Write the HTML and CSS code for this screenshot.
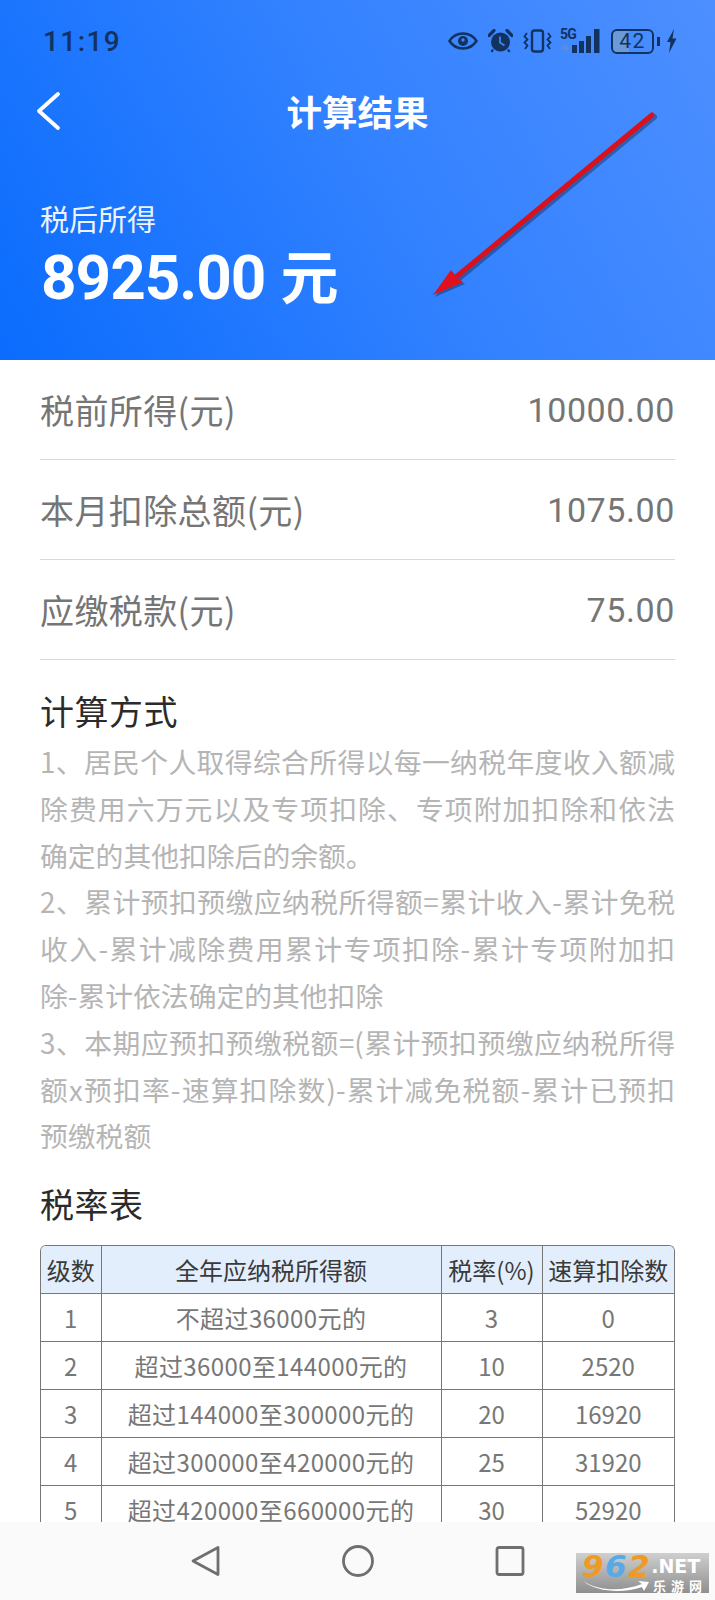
FILE: index.html
```html
<!DOCTYPE html>
<html lang="zh-CN">
<head>
<meta charset="utf-8">
<title>计算结果</title>
<link rel="stylesheet" href="styles.css">
</head>
<body>
<div class="page">
  <header class="hero">
    <div class="status">
      <span class="time">11:19</span>
      <div class="status-icons">
        <svg class="i-eye" viewBox="0 0 30 18"><path d="M1.500 9C5 3.500 10 1.500 15 1.500S25 3.500 28.500 9C25 14.500 20 16.500 15 16.500S5 14.500 1.500 9Z" fill="none" stroke="#12335f" stroke-width="2.600"/><circle cx="15" cy="9" r="5" fill="#12335f"/><circle cx="15" cy="8" r="1.700" fill="#3f86f5"/></svg>
        <svg class="i-alarm" viewBox="0 0 25 24"><circle cx="12.500" cy="13" r="9.500" fill="#12335f"/><path d="M1 6.500 6 1.500 M19 1.500 24 6.500" stroke="#12335f" stroke-width="3.200" stroke-linecap="round"/><path d="M5 20.500 3.500 23 M20 20.500 21.500 23" stroke="#12335f" stroke-width="2.200"/><path d="M12 7.500V13.500L16.500 16.500" fill="none" stroke="#3f86f5" stroke-width="1.800"/></svg>
        <svg class="i-vib" viewBox="0 0 29 24"><rect x="9" y="1.500" width="11" height="21" rx="2.500" fill="none" stroke="#12335f" stroke-width="2.400"/><path d="M4 4 1.500 7.500 4.500 10.500 1.500 13.500 4.500 16.500 2 20 M25 4 27.500 7.500 24.500 10.500 27.500 13.500 24.500 16.500 27 20" fill="none" stroke="#12335f" stroke-width="1.800"/></svg>
        <div class="signal">
          <span class="net">5G</span>
          <svg class="i-bars" viewBox="0 0 40 24"><path d="M1 18.500 4.500 15.500V22L1 19.500Z M9 18.500 5.500 15.500V22L9 19.500Z" fill="#5f8fd0"/><rect x="12" y="16" width="5" height="8" fill="#12335f"/><rect x="19" y="12" width="5" height="12" fill="#12335f"/><rect x="26" y="7" width="5" height="17" fill="#12335f"/><rect x="34" y="0" width="5.500" height="24" fill="#12335f"/></svg>
        </div>
        <div class="battery"><span class="level">42</span></div>
        <span class="nub"></span>
        <svg class="i-bolt" viewBox="0 0 11 24"><path d="M8 0 1 13H4.500L3 24 10.500 9.500H6.500Z" fill="#12335f"/></svg>
      </div>
    </div>
    <div class="topbar">
      <svg class="back" viewBox="0 0 26 40"><path d="M23 3 4 20 23 37" fill="none" stroke="#fff" stroke-width="3.800" stroke-linecap="round" stroke-linejoin="round"/></svg>
      <h1 class="title">计算结果</h1>
    </div>
    <p class="hero-label">税后所得</p>
    <p class="hero-value">8925.00<span class="hero-unit">元</span></p>
  </header>

  <main class="content">
    <div class="row"><span class="row-label">税前所得(元)</span><span class="num">10000.00</span></div>
    <div class="row"><span class="row-label">本月扣除总额(元)</span><span class="num">1075.00</span></div>
    <div class="row"><span class="row-label">应缴税款(元)</span><span class="num">75.00</span></div>

    <h2 class="section first">计算方式</h2>
    <div class="paras">
      <p class="para">1、居民个人取得综合所得以每一纳税年度收入额减除费用六万元以及专项扣除、专项附加扣除和依法确定的其他扣除后的余额。</p>
      <p class="para">2、累计预扣预缴应纳税所得额=累计收入-累计免税收入-累计减除费用累计专项扣除-累计专项附加扣除-累计依法确定的其他扣除</p>
      <p class="para">3、本期应预扣预缴税额=(累计预扣预缴应纳税所得额x预扣率-速算扣除数)-累计减免税额-累计已预扣预缴税额</p>
    </div>

    <h2 class="section second">税率表</h2>
    <div class="table-wrap">
      <table class="rates">
        <thead>
          <tr><th class="c1">级数</th><th class="c2">全年应纳税所得额</th><th class="c3">税率(%)</th><th class="c4">速算扣除数</th></tr>
        </thead>
        <tbody>
          <tr><td>1</td><td>不超过36000元的</td><td>3</td><td>0</td></tr>
          <tr><td>2</td><td>超过36000至144000元的</td><td>10</td><td>2520</td></tr>
          <tr><td>3</td><td>超过144000至300000元的</td><td>20</td><td>16920</td></tr>
          <tr><td>4</td><td>超过300000至420000元的</td><td>25</td><td>31920</td></tr>
          <tr><td>5</td><td>超过420000至660000元的</td><td>30</td><td>52920</td></tr>
        </tbody>
      </table>
    </div>
  </main>

  <nav class="navbar">
    <svg class="nav-icon" viewBox="0 0 32 32"><path d="M28 2.500V29.500L3 16Z" fill="none" stroke="#6f6f6f" stroke-width="2.800" stroke-linejoin="round"/></svg>
    <svg class="nav-icon" viewBox="0 0 32 32"><circle cx="16" cy="16" r="14.500" fill="none" stroke="#6f6f6f" stroke-width="2.800"/></svg>
    <svg class="nav-icon" viewBox="0 0 32 32"><rect x="3" y="2.500" width="26" height="27" rx="2" fill="none" stroke="#6f6f6f" stroke-width="2.800"/></svg>
  </nav>

  <svg class="arrow" viewBox="0 0 235 195">
    <g transform="translate(2 2)" opacity=".3"><path d="M31 169 227 7" stroke="#000" stroke-width="6" stroke-linecap="round"/><path d="M8 187 26 162 31 169 38 174Z" fill="#000"/></g>
    <path d="M31 169 227 7" stroke="#d8121c" stroke-width="5" stroke-linecap="round"/>
    <path d="M8 187 26 162 31 169 38 174Z" fill="#e0101c"/>
  </svg>

  <div class="badge">
    <div class="badge-top"><span class="b-num"><span class="b-o">9</span><span class="b-b">6</span><span class="b-o">2</span></span><span class="b-net">.NET</span></div>
    <div class="badge-bottom"><svg class="swoosh" viewBox="0 0 68 14"><path d="M1 2C18 13 42 12 60 5L56 2 67 3 62 12 60 8C42 14 16 14 1 2Z" fill="#fff"/></svg><span class="b-cn">乐游网</span></div>
  </div>
</div>
</body>
</html>
```

FILE: styles.css
```css
* { box-sizing: border-box; }
html, body { margin: 0; padding: 0; background: #fff; }
body { font-family: "Noto Sans CJK SC", "Noto Sans", sans-serif; }
.page {
  position: relative;
  width: 715px;
  height: 1600px;
  overflow: hidden;
  display: flex;
  flex-direction: column;
}

/* hero */
.hero {
  flex: none;
  height: 360px;
  padding: 0 40px;
  color: #fff;
  background: linear-gradient(60deg, #0a6cfd 0%, #3482ff 55%, #4d8fff 100%);
}
.status {
  height: 82px;
  display: flex;
  align-items: center;
  justify-content: space-between;
  margin-right: -2px;
}
.time {
  font-family: Roboto, sans-serif;
  font-size: 28px;
  font-weight: 500;
  letter-spacing: 1.400px;
  color: #12335f;
  margin-left: 3px;
}
.status-icons { display: flex; align-items: center; }
.i-eye { width: 30px; height: 18px; margin-right: 10px; }
.i-alarm { width: 25px; height: 24px; margin-right: 10px; }
.i-vib { width: 29px; height: 24px; margin-right: 8px; }
.signal { position: relative; width: 40px; height: 24px; margin-right: 11px; }
.net {
  position: absolute;
  left: 0;
  top: -2px;
  font-family: Roboto, sans-serif;
  font-size: 14px;
  font-weight: 700;
  line-height: 14px;
  letter-spacing: -.8px;
  color: #12335f;
}
.i-bars { width: 40px; height: 24px; display: block; }
.battery {
  width: 43px;
  height: 25px;
  border: 2.500px solid #12335f;
  border-radius: 6px;
  background: linear-gradient(90deg, #6a9ad8 0 42%, transparent 42%);
  display: flex;
  align-items: center;
  justify-content: center;
}
.level {
  font-family: Roboto, sans-serif;
  font-size: 21px;
  line-height: 20px;
  letter-spacing: 1.500px;
  color: #12335f;
}
.nub { width: 3px; height: 9px; background: #12335f; margin: 0 6px 0 3px; }
.i-bolt { width: 11px; height: 24px; }
.topbar {
  position: relative;
  height: 58px;
  display: flex;
  align-items: center;
  justify-content: center;
}
.back { position: absolute; left: -5px; top: 9px; width: 26px; height: 40px; }
.title { margin: 0; font-size: 35.500px; font-weight: 700; line-height: 58px; }
.hero-label { margin: 58px 0 0; font-size: 29px; line-height: 40px; opacity: .92; }
.hero-value {
  margin: 1px 0 0 1px;
  font-family: Roboto, sans-serif;
  font-size: 62px;
  font-weight: 700;
  line-height: 70px;
  letter-spacing: -1px;
}
.hero-unit { font-family: "Noto Sans CJK SC", sans-serif; font-size: 58px; letter-spacing: 0; margin-left: 15px; }

/* content */
.content { flex: 1; min-height: 0; overflow: hidden; padding: 0 40px; }
.row {
  height: 100px;
  display: flex;
  align-items: center;
  justify-content: space-between;
  border-bottom: 1px solid #d9d9d9;
  font-size: 34px;
  color: #757575;
}
.row-label { letter-spacing: .4px; }
.num { font-family: Roboto, sans-serif; letter-spacing: .6px; }
.section { margin: 0; font-size: 34px; font-weight: 400; line-height: 47px; letter-spacing: .5px; color: #2b2b2b; }
.first { margin-top: 27px; }
.second { margin-top: 21px; }
.paras { margin-top: 4px; }
.para {
  margin: 0;
  font-size: 27.800px;
  line-height: 46.800px;
  color: #b5b5b5;
  text-align: justify;
  overflow-wrap: anywhere;
}

/* table */
.table-wrap {
  margin-top: 18px;
  border: 1px solid #777;
  border-bottom: 0;
  border-radius: 6px 6px 0 0;
  overflow: hidden;
}
.rates {
  width: 100%;
  table-layout: fixed;
  border-collapse: collapse;
  font-size: 24px;
  text-align: center;
  color: #777;
}
.rates th, .rates td {
  height: 48px;
  padding: 0;
  border: 1px solid #777;
  white-space: nowrap;
}
.rates tbody td:nth-child(2) { letter-spacing: .4px; }
.rates tr > :first-child { border-left: 0; }
.rates tr > :last-child { border-right: 0; }
.rates thead th { border-top: 0; height: 47px; }
.rates th { font-weight: 400; color: #3a3a3a; background: #e3eefc; }
.c1 { width: 60px; }
.c2 { width: 340px; }
.c3 { width: 101px; }
.c4 { width: 132px; }

/* nav */
.navbar {
  flex: none;
  height: 78px;
  background: #fafafa;
  display: flex;
  align-items: flex-start;
  justify-content: center;
  gap: 120px;
  padding-top: 23px;
}
.nav-icon { width: 32px; height: 32px; }

/* overlays */
.arrow { position: absolute; left: 425px; top: 108px; width: 235px; height: 195px; }
.badge {
  position: absolute;
  left: 576px;
  top: 1553px;
  width: 133px;
  height: 40px;
  padding: 1px 0 0 6px;
  background: linear-gradient(180deg, #cfcfcf, #8f8f8f);
  color: #fff;
  overflow: hidden;
}
.badge-top { display: flex; align-items: center; height: 24px; }
.b-num {
  font-family: "DejaVu Sans", sans-serif;
  font-size: 31px;
  font-weight: 700;
  font-style: italic;
  line-height: 24px;
  letter-spacing: 1.500px;
}
.b-o { color: #f09a26; }
.b-b { color: #58a9e6; }
.b-net {
  font-family: "DejaVu Sans", sans-serif;
  font-size: 19px;
  font-weight: 700;
  line-height: 20px;
}
.badge-bottom { display: flex; align-items: center; height: 15px; }
.swoosh { width: 68px; height: 14px; margin-right: 3px; }
.b-cn { font-size: 13px; line-height: 15px; font-weight: 700; letter-spacing: 5px; white-space: nowrap; }
```
